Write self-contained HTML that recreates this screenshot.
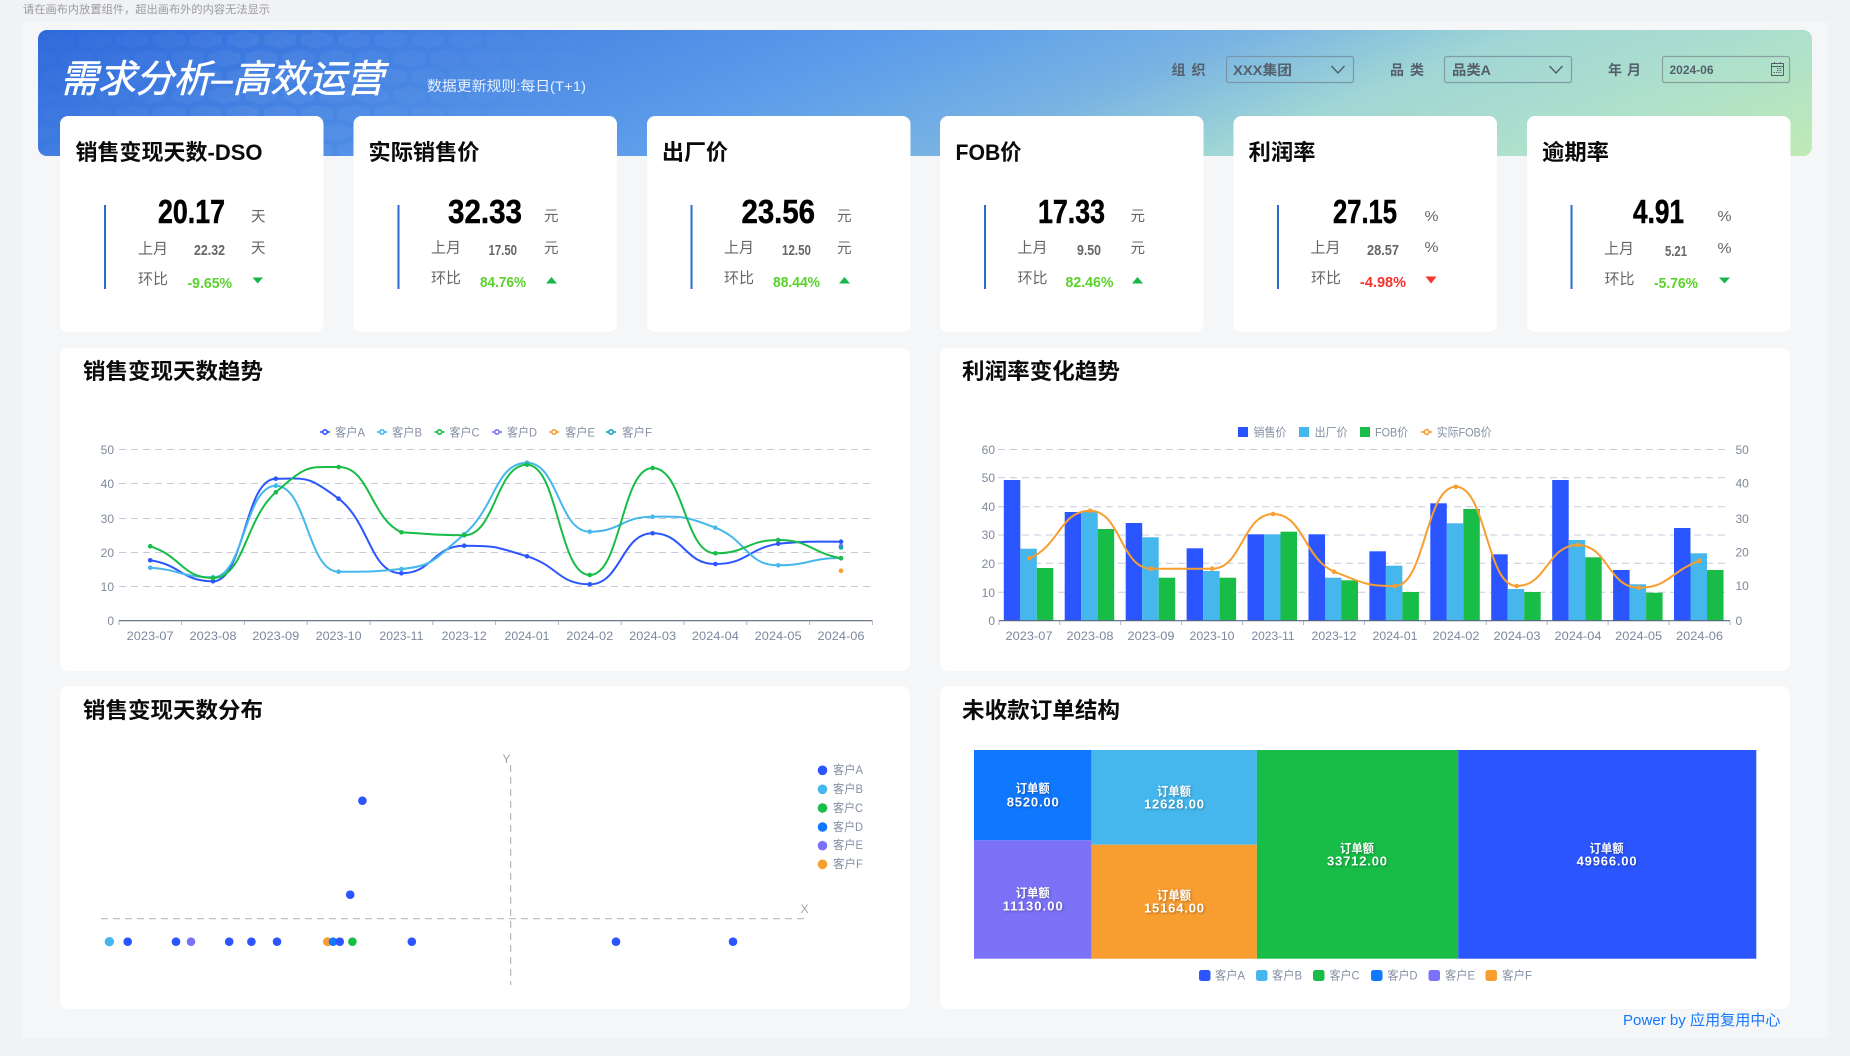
<!DOCTYPE html>
<html lang="zh-CN">
<head>
<meta charset="utf-8">
<title>需求分析-高效运营</title>
<style>
html,body{margin:0;padding:0;background:#f0f2f5;width:1850px;height:1056px;overflow:hidden}
svg{display:block;position:absolute;left:0;top:0}
text{font-family:"Liberation Sans","Noto Sans CJK SC",sans-serif}
.ct{font-size:22px;font-weight:700;fill:#0a0a0a}
.big{font-size:33px;font-weight:700;fill:#000;stroke:#000;stroke-width:.5px}
.u{font-size:14.5px;fill:#666}
.lb{font-size:15px;fill:#666}
.pv{font-size:15px;font-weight:700;fill:#666}
.g{font-size:15px;font-weight:700;fill:#5ad22a}
.r{font-size:15px;font-weight:700;fill:#f5332d}
.ax{font-size:12px;fill:#7d889c}
.lg{font-size:12px;fill:#848fa3}
.hd{font-size:14px;font-weight:700;fill:#55606c}
.tm{font-size:12px;font-weight:700;fill:#fff;text-anchor:middle}
.tn{font-size:13px;font-weight:700;fill:#fff;text-anchor:middle}
</style>
</head>
<body>
<svg width="1850" height="1056" viewBox="0 0 1850 1056" xmlns="http://www.w3.org/2000/svg">
<defs>
<linearGradient id="bn" gradientUnits="userSpaceOnUse" x1="38" y1="30" x2="319" y2="744">
<stop offset="0" stop-color="#2d69db"/>
<stop offset=".42" stop-color="#5c9cea"/>
<stop offset=".58" stop-color="#78b3e3"/>
<stop offset=".71" stop-color="#a0d6d5"/>
<stop offset=".85" stop-color="#aee0cc"/>
<stop offset="1" stop-color="#bfeab5"/>
</linearGradient>
<pattern id="hex" patternUnits="userSpaceOnUse" x="40" y="31" width="37" height="37">
<polygon points="18,0 34,4.5 34,13 18,17.5 2,13 2,4.5" fill="#fff"/>
<polygon points="-.5,18.5 15.5,23 15.5,31.5 -.5,36 -16.5,31.5 -16.5,23" fill="#fff"/>
<polygon points="36.5,18.5 52.5,23 52.5,31.5 36.5,36 20.5,31.5 20.5,23" fill="#fff"/>
</pattern>
<linearGradient id="hf" gradientUnits="userSpaceOnUse" x1="60" y1="30" x2="620" y2="120">
<stop offset="0" stop-color="#fff" stop-opacity=".015"/>
<stop offset=".35" stop-color="#fff" stop-opacity=".06"/>
<stop offset=".7" stop-color="#fff" stop-opacity=".03"/>
<stop offset="1" stop-color="#fff" stop-opacity="0"/>
</linearGradient>
<mask id="hm"><rect x="38" y="30" width="700" height="126" fill="url(#hf)"/></mask>
<marker id="mA" markerUnits="userSpaceOnUse" markerWidth="6" markerHeight="6" refX="3" refY="3"><circle cx="3" cy="3" r="2.3" fill="#2b55ff"/></marker>
<marker id="mB" markerUnits="userSpaceOnUse" markerWidth="6" markerHeight="6" refX="3" refY="3"><circle cx="3" cy="3" r="2.3" fill="#45b7ec"/></marker>
<marker id="mC" markerUnits="userSpaceOnUse" markerWidth="6" markerHeight="6" refX="3" refY="3"><circle cx="3" cy="3" r="2.3" fill="#17bd47"/></marker>
<marker id="mO" markerUnits="userSpaceOnUse" markerWidth="6" markerHeight="6" refX="3" refY="3"><circle cx="3" cy="3" r="2.3" fill="#f89d30"/></marker>
</defs>

<!-- canvas -->
<rect width="1850" height="1056" fill="#f0f2f5"/>
<rect x="22" y="22" width="1806" height="1016" fill="#f5f6f8"/>
<text x="23" y="13" font-size="11" fill="#9b9b9b" textLength="247" lengthAdjust="spacingAndGlyphs">请在画布内放置组件，超出画布外的内容无法显示</text>

<!-- banner -->
<rect x="38" y="30" width="1774" height="126" rx="9" fill="url(#bn)"/>
<rect x="38" y="30" width="700" height="126" fill="url(#hex)" mask="url(#hm)"/>
<text x="60" y="92" font-size="38" font-style="italic" font-weight="400" fill="#fff" stroke="#fff" stroke-width=".6" textLength="324" lengthAdjust="spacingAndGlyphs">需求分析–高效运营</text>
<text x="427" y="91" font-size="14" fill="#e8f1fc" textLength="159" lengthAdjust="spacingAndGlyphs">数据更新规则:每日(T+1)</text>

<text class="hd" x="1171.5" y="75" textLength="34">组 织</text>
<rect x="1226.5" y="56.5" width="127" height="26" rx="2" fill="none" stroke="#7a97a8" stroke-width="1.2"/>
<text class="hd" x="1233" y="75" textLength="59" lengthAdjust="spacingAndGlyphs">XXX集团</text>
<path d="M1331.5 66 L1338 73 L1344.5 66" fill="none" stroke="#4d5c68" stroke-width="1.3"/>

<text class="hd" x="1390" y="75" textLength="34">品 类</text>
<rect x="1444.5" y="56.5" width="127" height="26" rx="2" fill="none" stroke="#7f9ca8" stroke-width="1.2"/>
<text class="hd" x="1452" y="75" textLength="39" lengthAdjust="spacingAndGlyphs">品类A</text>
<path d="M1549.5 66 L1556 73 L1562.5 66" fill="none" stroke="#4d5c68" stroke-width="1.3"/>

<text class="hd" x="1608" y="75" textLength="33">年 月</text>
<rect x="1662.5" y="56.5" width="127" height="26" rx="2" fill="none" stroke="#8aa09f" stroke-width="1.2"/>
<text x="1669.5" y="74" font-size="12" fill="#55606c" font-weight="700" textLength="44" lengthAdjust="spacingAndGlyphs">2024-06</text>
<g fill="none" stroke="#55606c" stroke-width="1">
<rect x="1771.5" y="63.5" width="12" height="12"/>
<path d="M1771.5 66.5 H1783.5 M1774.5 62 V64 M1780.5 62 V64"/>
<path d="M1777 68.5h5M1777 70.5h5M1773.5 72.5h8" stroke-dasharray="1.4 1"/>
</g>

<!-- KPI cards -->
<g fill="#fff">
<rect x="60" y="116" width="263.5" height="216" rx="8"/>
<rect x="353.5" y="116" width="263.5" height="216" rx="8"/>
<rect x="647" y="116" width="263.5" height="216" rx="8"/>
<rect x="940" y="116" width="263.5" height="216" rx="8"/>
<rect x="1233.5" y="116" width="263.5" height="216" rx="8"/>
<rect x="1527" y="116" width="263.5" height="216" rx="8"/>
</g>
<g fill="#2b6cd2">
<rect x="104" y="205" width="2" height="84"/>
<rect x="397.5" y="205" width="2" height="84"/>
<rect x="690.5" y="205" width="2" height="84"/>
<rect x="984" y="205" width="2" height="84"/>
<rect x="1277" y="205" width="2" height="84"/>
<rect x="1570.5" y="205" width="2" height="84"/>
</g>

<!-- card 1 -->
<text class="ct" x="75.5" y="160" textLength="187" lengthAdjust="spacingAndGlyphs">销售变现天数-DSO</text>
<text class="big" x="158" y="223" textLength="67" lengthAdjust="spacingAndGlyphs">20.17</text>
<text class="u" x="251" y="221.5">天</text>
<text class="lb" x="138" y="253.5">上月</text>
<text class="pv" x="194" y="255" textLength="31" lengthAdjust="spacingAndGlyphs">22.32</text>
<text class="u" x="251" y="253">天</text>
<text class="lb" x="138" y="284">环比</text>
<text class="g" x="187.5" y="288" textLength="44.5" lengthAdjust="spacingAndGlyphs">-9.65%</text>
<path d="M252.5 277.5H263L257.7 283.5Z" fill="#17b54a"/>

<!-- card 2 -->
<text class="ct" x="368.5" y="160" textLength="111" lengthAdjust="spacingAndGlyphs">实际销售价</text>
<text class="big" x="448" y="223" textLength="74" lengthAdjust="spacingAndGlyphs">32.33</text>
<text class="u" x="544" y="221">元</text>
<text class="lb" x="431" y="252.5">上月</text>
<text class="pv" x="488.5" y="255" textLength="28.5" lengthAdjust="spacingAndGlyphs">17.50</text>
<text class="u" x="544" y="253">元</text>
<text class="lb" x="431" y="283">环比</text>
<text class="g" x="480" y="287" textLength="46" lengthAdjust="spacingAndGlyphs">84.76%</text>
<path d="M546 283.5H557L551.5 277Z" fill="#17b54a"/>

<!-- card 3 -->
<text class="ct" x="662" y="160" textLength="66" lengthAdjust="spacingAndGlyphs">出厂价</text>
<text class="big" x="741.5" y="223" textLength="73.5" lengthAdjust="spacingAndGlyphs">23.56</text>
<text class="u" x="837" y="221">元</text>
<text class="lb" x="724" y="252.5">上月</text>
<text class="pv" x="782" y="255" textLength="29" lengthAdjust="spacingAndGlyphs">12.50</text>
<text class="u" x="837" y="253">元</text>
<text class="lb" x="724" y="283">环比</text>
<text class="g" x="773" y="287" textLength="47" lengthAdjust="spacingAndGlyphs">88.44%</text>
<path d="M839 283.5H850L844.5 277Z" fill="#17b54a"/>

<!-- card 4 -->
<text class="ct" x="955.5" y="160" textLength="66" lengthAdjust="spacingAndGlyphs">FOB价</text>
<text class="big" x="1038" y="223" textLength="67" lengthAdjust="spacingAndGlyphs">17.33</text>
<text class="u" x="1130.5" y="221">元</text>
<text class="lb" x="1017.5" y="252.5">上月</text>
<text class="pv" x="1077" y="255" textLength="24" lengthAdjust="spacingAndGlyphs">9.50</text>
<text class="u" x="1130.5" y="253">元</text>
<text class="lb" x="1017.5" y="283">环比</text>
<text class="g" x="1065.5" y="287" textLength="48" lengthAdjust="spacingAndGlyphs">82.46%</text>
<path d="M1132 283.5H1143L1137.5 277Z" fill="#17b54a"/>

<!-- card 5 -->
<text class="ct" x="1248.5" y="160" textLength="67" lengthAdjust="spacingAndGlyphs">利润率</text>
<text class="big" x="1333" y="223" textLength="64" lengthAdjust="spacingAndGlyphs">27.15</text>
<text class="u" x="1424.5" y="221" textLength="14" lengthAdjust="spacingAndGlyphs">%</text>
<text class="lb" x="1310.5" y="252.5">上月</text>
<text class="pv" x="1367" y="255" textLength="32" lengthAdjust="spacingAndGlyphs">28.57</text>
<text class="u" x="1424.5" y="252" textLength="14" lengthAdjust="spacingAndGlyphs">%</text>
<text class="lb" x="1311" y="283">环比</text>
<text class="r" x="1360" y="287" textLength="46" lengthAdjust="spacingAndGlyphs">-4.98%</text>
<path d="M1425.5 276.5H1436.5L1431 283.5Z" fill="#f5332d"/>

<!-- card 6 -->
<text class="ct" x="1542" y="160" textLength="67" lengthAdjust="spacingAndGlyphs">逾期率</text>
<text class="big" x="1633" y="223" textLength="51" lengthAdjust="spacingAndGlyphs">4.91</text>
<text class="u" x="1717.5" y="221" textLength="14" lengthAdjust="spacingAndGlyphs">%</text>
<text class="lb" x="1604" y="253.5">上月</text>
<text class="pv" x="1665" y="256" textLength="22" lengthAdjust="spacingAndGlyphs">5.21</text>
<text class="u" x="1717.5" y="253" textLength="14" lengthAdjust="spacingAndGlyphs">%</text>
<text class="lb" x="1604.5" y="284">环比</text>
<text class="g" x="1654" y="288" textLength="44" lengthAdjust="spacingAndGlyphs">-5.76%</text>
<path d="M1719 277.5H1730L1724.5 283.5Z" fill="#17b54a"/>

<!-- panels -->
<g fill="#fff">
<rect x="60" y="348" width="850" height="323" rx="8"/>
<rect x="940" y="348" width="850" height="323" rx="8"/>
<rect x="60" y="686" width="850" height="323" rx="8"/>
<rect x="940" y="686" width="850" height="323" rx="8"/>
</g>
<text class="ct" x="83" y="379" textLength="180" lengthAdjust="spacingAndGlyphs">销售变现天数趋势</text>
<text class="ct" x="962" y="379" textLength="158" lengthAdjust="spacingAndGlyphs">利润率变化趋势</text>
<text class="ct" x="83" y="718" textLength="180" lengthAdjust="spacingAndGlyphs">销售变现天数分布</text>
<text class="ct" x="962" y="718" textLength="158" lengthAdjust="spacingAndGlyphs">未收款订单结构</text>

<!-- chart 1 -->
<g fill="none" stroke-width="1.6">
<path d="M320 432h10" stroke="#2b55ff"/><circle cx="325" cy="432" r="2.2" fill="#fff" stroke="#2b55ff"/>
<path d="M377 432h10" stroke="#45b7ec"/><circle cx="382" cy="432" r="2.2" fill="#fff" stroke="#45b7ec"/>
<path d="M434.5 432h10" stroke="#17bd47"/><circle cx="439.5" cy="432" r="2.2" fill="#fff" stroke="#17bd47"/>
<path d="M492 432h10" stroke="#7b72f8"/><circle cx="497" cy="432" r="2.2" fill="#fff" stroke="#7b72f8"/>
<path d="M549 432h10" stroke="#f89d30"/><circle cx="554" cy="432" r="2.2" fill="#fff" stroke="#f89d30"/>
<path d="M606 432h10" stroke="#1aa7b8"/><circle cx="611" cy="432" r="2.2" fill="#fff" stroke="#1aa7b8"/>
</g>
<text class="lg" x="335" y="436.5" textLength="30" lengthAdjust="spacingAndGlyphs">客户A</text>
<text class="lg" x="392" y="436.5" textLength="30" lengthAdjust="spacingAndGlyphs">客户B</text>
<text class="lg" x="449.5" y="436.5" textLength="30" lengthAdjust="spacingAndGlyphs">客户C</text>
<text class="lg" x="507" y="436.5" textLength="30" lengthAdjust="spacingAndGlyphs">客户D</text>
<text class="lg" x="565" y="436.5" textLength="30" lengthAdjust="spacingAndGlyphs">客户E</text>
<text class="lg" x="622" y="436.5" textLength="30" lengthAdjust="spacingAndGlyphs">客户F</text>

<g stroke="#c3cbd8" stroke-width="1" stroke-dasharray="7 5">
<path d="M119 449.5H870M119 483.5H870M119 518.5H870M119 552.5H870M119 586.5H870"/>
</g>
<g text-anchor="end">
<text class="ax" x="114" y="454">50</text>
<text class="ax" x="114" y="488">40</text>
<text class="ax" x="114" y="523">30</text>
<text class="ax" x="114" y="557">20</text>
<text class="ax" x="114" y="591">10</text>
<text class="ax" x="114" y="625">0</text>
</g>
<path d="M118.8 620.7H872.4" stroke="#59647c" stroke-width="1.2"/>
<path d="M119 621v4M181.6 621v4M244.4 621v4M307.2 621v4M370 621v4M432.8 621v4M495.6 621v4M558.4 621v4M621.2 621v4M684 621v4M746.8 621v4M809.6 621v4M872.4 621v4" stroke="#a9b3c4" stroke-width="1"/>
<g text-anchor="middle">
<text class="ax" x="150.2" y="640" textLength="47" lengthAdjust="spacingAndGlyphs">2023-07</text>
<text class="ax" x="213" y="640" textLength="47" lengthAdjust="spacingAndGlyphs">2023-08</text>
<text class="ax" x="275.8" y="640" textLength="47" lengthAdjust="spacingAndGlyphs">2023-09</text>
<text class="ax" x="338.6" y="640" textLength="46" lengthAdjust="spacingAndGlyphs">2023-10</text>
<text class="ax" x="401.4" y="640" textLength="44" lengthAdjust="spacingAndGlyphs">2023-11</text>
<text class="ax" x="464.2" y="640" textLength="45" lengthAdjust="spacingAndGlyphs">2023-12</text>
<text class="ax" x="527" y="640" textLength="45" lengthAdjust="spacingAndGlyphs">2024-01</text>
<text class="ax" x="589.8" y="640" textLength="47" lengthAdjust="spacingAndGlyphs">2024-02</text>
<text class="ax" x="652.6" y="640" textLength="47" lengthAdjust="spacingAndGlyphs">2024-03</text>
<text class="ax" x="715.4" y="640" textLength="47" lengthAdjust="spacingAndGlyphs">2024-04</text>
<text class="ax" x="778.2" y="640" textLength="47" lengthAdjust="spacingAndGlyphs">2024-05</text>
<text class="ax" x="841" y="640" textLength="47" lengthAdjust="spacingAndGlyphs">2024-06</text>
</g>
<g fill="none" stroke-width="2" stroke-linejoin="round">
<path stroke="#2b55ff" marker-start="url(#mA)" marker-mid="url(#mA)" marker-end="url(#mA)" d="M150.2 560.3C181.6 565,181.6 581.3,213 581.3C244.4 581.3,244.4 478.7,275.8 478.7C307.2 478.7,307.2 475.1,338.6 498.7C370 522.3,370 573.3,401.4 573.3C432.8 573.3,432.8 545.7,464.2 545.7C495.6 545.7,495.6 546.65,527 556.3C558.4 565.95,558.4 584.3,589.8 584.3C621.2 584.3,621.2 533.3,652.6 533.3C684 533.3,684 564,715.4 564C746.8 564,746.8 549.3,778.2 543.7C809.6 541,809.6 541.7,841 541.7"/>
<path stroke="#45b7ec" marker-start="url(#mB)" marker-mid="url(#mB)" marker-end="url(#mB)" d="M150.2 567.7C181.6 570,181.6 577.3,213 577.3C244.4 577.3,244.4 485.7,275.8 485.7C307.2 485.7,307.2 571.7,338.6 571.7C370 571.7,370 572,401.4 569C432.8 566,432.8 560.9,464.2 534.3C495.6 507.7,495.6 462.7,527 462.7C558.4 462.7,558.4 531.7,589.8 531.7C621.2 531.7,621.2 516.7,652.6 516.7C684 516.7,684 515.55,715.4 527.7C746.8 539.85,746.8 565.3,778.2 565.3C809.6 565.3,809.6 558,841 558"/>
<path stroke="#17bd47" marker-start="url(#mC)" marker-mid="url(#mC)" marker-end="url(#mC)" d="M150.2 546.3C181.6 556,181.6 578,213 578C244.4 578,244.4 520,275.8 492.3C307.2 464.5,307.2 467,338.6 467C370 467,370 518,401.4 532.3C432.8 534,432.8 535.3,464.2 535.3C495.6 535.3,495.6 464.7,527 464.7C558.4 464.7,558.4 575,589.8 575C621.2 575,621.2 468,652.6 468C684 468,684 553.3,715.4 553.3C746.8 553.3,746.8 540,778.2 540C809.6 540,809.6 552,841 558.3"/>
</g>
<circle cx="841" cy="546" r="2.3" fill="#7b72f8"/>
<circle cx="841" cy="547.5" r="2.3" fill="#1aa7b8"/>
<circle cx="841" cy="570.7" r="2.3" fill="#f89d30"/>

<!-- chart 2 -->
<rect x="1238" y="427" width="10" height="10" fill="#2b55ff"/>
<rect x="1299" y="427" width="10" height="10" fill="#45b7ec"/>
<rect x="1360" y="427" width="10" height="10" fill="#17bd47"/>
<path d="M1421 432h11" stroke="#f89d30" stroke-width="1.6"/><circle cx="1426.7" cy="432" r="2.4" fill="#fff" stroke="#f89d30" stroke-width="1.6"/>
<text class="lg" x="1253.5" y="436.5" textLength="33" lengthAdjust="spacingAndGlyphs">销售价</text>
<text class="lg" x="1314.6" y="436.5" textLength="33" lengthAdjust="spacingAndGlyphs">出厂价</text>
<text class="lg" x="1375" y="436.5" textLength="33" lengthAdjust="spacingAndGlyphs">FOB价</text>
<text class="lg" x="1436.7" y="436.5" textLength="55" lengthAdjust="spacingAndGlyphs">实际FOB价</text>

<path d="M998 449.5H1726M998 477.7H1726M998 506.7H1726M998 535H1726M998 563.3H1726M998 592.3H1726" stroke="#c3cbd8" stroke-width="1" stroke-dasharray="7 5"/>
<g text-anchor="end">
<text class="ax" x="995" y="454">60</text>
<text class="ax" x="995" y="482">50</text>
<text class="ax" x="995" y="511">40</text>
<text class="ax" x="995" y="539">30</text>
<text class="ax" x="995" y="568">20</text>
<text class="ax" x="995" y="597">10</text>
<text class="ax" x="995" y="625">0</text>
</g>
<text class="ax" x="1735.5" y="454">50</text>
<text class="ax" x="1735.5" y="487.5">40</text>
<text class="ax" x="1735.5" y="523">30</text>
<text class="ax" x="1735.5" y="556.5">20</text>
<text class="ax" x="1735.5" y="590">10</text>
<text class="ax" x="1735.5" y="625">0</text>

<g fill="#2b55ff">
<rect x="1003.8" y="480" width="16.5" height="140.7"/>
<rect x="1064.7" y="512" width="16.5" height="108.7"/>
<rect x="1125.7" y="523" width="16.5" height="97.7"/>
<rect x="1186.6" y="548.3" width="16.5" height="72.4"/>
<rect x="1247.5" y="534.3" width="16.5" height="86.4"/>
<rect x="1308.5" y="534.3" width="16.5" height="86.4"/>
<rect x="1369.4" y="551.3" width="16.5" height="69.4"/>
<rect x="1430.3" y="503.3" width="16.5" height="117.4"/>
<rect x="1491.2" y="554.3" width="16.5" height="66.4"/>
<rect x="1552.2" y="480" width="16.5" height="140.7"/>
<rect x="1613.1" y="570" width="16.5" height="50.7"/>
<rect x="1674" y="528" width="16.5" height="92.7"/>
</g>
<g fill="#45b7ec">
<rect x="1020.3" y="548.7" width="16.5" height="72"/>
<rect x="1081.2" y="511" width="16.5" height="109.7"/>
<rect x="1142.2" y="537.3" width="16.5" height="83.4"/>
<rect x="1203.1" y="571" width="16.5" height="49.7"/>
<rect x="1264" y="534.3" width="16.5" height="86.4"/>
<rect x="1325" y="577.7" width="16.5" height="43"/>
<rect x="1385.9" y="565.7" width="16.5" height="55"/>
<rect x="1446.8" y="523.3" width="16.5" height="97.4"/>
<rect x="1507.7" y="589" width="16.5" height="31.7"/>
<rect x="1568.7" y="540" width="16.5" height="80.7"/>
<rect x="1629.6" y="584.3" width="16.5" height="36.4"/>
<rect x="1690.5" y="553.3" width="16.5" height="67.4"/>
</g>
<g fill="#17bd47">
<rect x="1036.8" y="568" width="16.5" height="52.7"/>
<rect x="1097.7" y="529" width="16.5" height="91.7"/>
<rect x="1158.7" y="577.7" width="16.5" height="43"/>
<rect x="1219.6" y="577.7" width="16.5" height="43"/>
<rect x="1280.5" y="531.7" width="16.5" height="89"/>
<rect x="1341.5" y="580.3" width="16.5" height="40.4"/>
<rect x="1402.4" y="592" width="16.5" height="28.7"/>
<rect x="1463.3" y="509" width="16.5" height="111.7"/>
<rect x="1524.2" y="592" width="16.5" height="28.7"/>
<rect x="1585.2" y="557.3" width="16.5" height="63.4"/>
<rect x="1646.1" y="592.7" width="16.5" height="28"/>
<rect x="1707" y="570" width="16.5" height="50.7"/>
</g>
<path d="M998.8 620.7H1730" stroke="#59647c" stroke-width="1.2"/>
<path d="M999 621v4M1059.7 621v4M1120.7 621v4M1181.6 621v4M1242.5 621v4M1303.5 621v4M1364.4 621v4M1425.3 621v4M1486.2 621v4M1547.2 621v4M1608.1 621v4M1669 621v4M1730 621v4" stroke="#a9b3c4" stroke-width="1"/>
<g text-anchor="middle">
<text class="ax" x="1029" y="640" textLength="47" lengthAdjust="spacingAndGlyphs">2023-07</text>
<text class="ax" x="1090" y="640" textLength="47" lengthAdjust="spacingAndGlyphs">2023-08</text>
<text class="ax" x="1151" y="640" textLength="47" lengthAdjust="spacingAndGlyphs">2023-09</text>
<text class="ax" x="1212" y="640" textLength="45" lengthAdjust="spacingAndGlyphs">2023-10</text>
<text class="ax" x="1273" y="640" textLength="43" lengthAdjust="spacingAndGlyphs">2023-11</text>
<text class="ax" x="1334" y="640" textLength="45" lengthAdjust="spacingAndGlyphs">2023-12</text>
<text class="ax" x="1395" y="640" textLength="45" lengthAdjust="spacingAndGlyphs">2024-01</text>
<text class="ax" x="1456" y="640" textLength="47" lengthAdjust="spacingAndGlyphs">2024-02</text>
<text class="ax" x="1517" y="640" textLength="47" lengthAdjust="spacingAndGlyphs">2024-03</text>
<text class="ax" x="1578" y="640" textLength="47" lengthAdjust="spacingAndGlyphs">2024-04</text>
<text class="ax" x="1638.6" y="640" textLength="47" lengthAdjust="spacingAndGlyphs">2024-05</text>
<text class="ax" x="1699.5" y="640" textLength="47" lengthAdjust="spacingAndGlyphs">2024-06</text>
</g>
<path fill="none" stroke="#f89d30" stroke-width="2" marker-start="url(#mO)" marker-mid="url(#mO)" marker-end="url(#mO)" d="M1029.3 558.3C1059.8 546,1059.8 510.7,1090.2 510.7C1120.7 510.7,1120.7 568.7,1151.2 568.7C1181.6 568.7,1181.6 568.7,1212.1 568.7C1242.5 568.7,1242.5 514,1273 514C1303.5 514,1303.5 558,1334 571.7C1364.4 583,1364.4 586,1394.9 586C1425.3 586,1425.3 486.7,1455.8 486.7C1486.3 486.7,1486.3 586,1516.7 586C1547.2 586,1547.2 545,1577.7 545C1608.1 545,1608.1 587.7,1638.6 587.7C1669 587.7,1669 572,1699.5 560.7"/>

<!-- scatter -->
<path d="M510.6 765V985M101 918.7H807.5" stroke="#b9b9b9" stroke-width="1.2" stroke-dasharray="7 5" fill="none"/>
<text x="502.5" y="763" font-size="12" fill="#a3a3a3">Y</text>
<text x="800.5" y="913" font-size="12" fill="#a3a3a3">X</text>
<g fill="#2b55ff">
<circle cx="362.4" cy="800.7" r="4.3"/>
<circle cx="350.2" cy="894.7" r="4.3"/>
<circle cx="127.7" cy="941.7" r="4.3"/>
<circle cx="176" cy="941.7" r="4.3"/>
<circle cx="229.2" cy="941.7" r="4.3"/>
<circle cx="251.4" cy="941.7" r="4.3"/>
<circle cx="277" cy="941.7" r="4.3"/>
<circle cx="411.8" cy="941.7" r="4.3"/>
<circle cx="616" cy="941.7" r="4.3"/>
<circle cx="733" cy="941.7" r="4.3"/>
</g>
<circle cx="109.4" cy="941.7" r="4.7" fill="#45b7ec"/>
<circle cx="191" cy="941.7" r="4.3" fill="#7b72f8"/>
<circle cx="327.5" cy="941.7" r="4.5" fill="#f89d30"/>
<circle cx="333" cy="941.7" r="4.3" fill="#0f78ff"/>
<circle cx="339.7" cy="941.7" r="4.3" fill="#2b55ff"/>
<circle cx="352.4" cy="941.7" r="4.3" fill="#17bd47"/>
<circle cx="822.5" cy="770.3" r="4.8" fill="#2b55ff"/>
<circle cx="822.5" cy="789.3" r="4.8" fill="#45b7ec"/>
<circle cx="822.5" cy="808" r="4.8" fill="#17bd47"/>
<circle cx="822.5" cy="827" r="4.8" fill="#0f78ff"/>
<circle cx="822.5" cy="845.7" r="4.8" fill="#7b72f8"/>
<circle cx="822.5" cy="864.3" r="4.8" fill="#f89d30"/>
<text class="lg" x="833" y="774" textLength="30" lengthAdjust="spacingAndGlyphs">客户A</text>
<text class="lg" x="833" y="793" textLength="30" lengthAdjust="spacingAndGlyphs">客户B</text>
<text class="lg" x="833" y="812" textLength="30" lengthAdjust="spacingAndGlyphs">客户C</text>
<text class="lg" x="833" y="831" textLength="30" lengthAdjust="spacingAndGlyphs">客户D</text>
<text class="lg" x="833" y="849" textLength="30" lengthAdjust="spacingAndGlyphs">客户E</text>
<text class="lg" x="833" y="868" textLength="30" lengthAdjust="spacingAndGlyphs">客户F</text>

<!-- treemap -->
<rect x="974" y="750" width="117.4" height="90.3" fill="#0f78ff"/>
<rect x="974" y="840.3" width="117.4" height="118.4" fill="#7b72f8"/>
<rect x="1091.4" y="750" width="165.5" height="94.7" fill="#45b7ec"/>
<rect x="1091.4" y="844.7" width="165.5" height="114" fill="#f89d30"/>
<rect x="1256.9" y="750" width="201.3" height="208.7" fill="#17bd47"/>
<rect x="1458.2" y="750" width="298.1" height="208.7" fill="#2b55ff"/>
<g style="filter:drop-shadow(1px 1px 1px rgba(0,0,0,.3))">
<text class="tm" x="1032.7" y="792.5" textLength="34" lengthAdjust="spacingAndGlyphs">订单额</text>
<text class="tn" x="1032.7" y="806.5" textLength="52" lengthAdjust="spacing">8520.00</text>
<text class="tm" x="1032.7" y="897" textLength="34" lengthAdjust="spacingAndGlyphs">订单额</text>
<text class="tn" x="1032.7" y="910.5" textLength="60" lengthAdjust="spacing">11130.00</text>
<text class="tm" x="1174" y="795.5" textLength="34" lengthAdjust="spacingAndGlyphs">订单额</text>
<text class="tn" x="1174" y="808.5" textLength="60" lengthAdjust="spacing">12628.00</text>
<text class="tm" x="1174" y="899.5" textLength="34" lengthAdjust="spacingAndGlyphs">订单额</text>
<text class="tn" x="1174" y="912.5" textLength="60" lengthAdjust="spacing">15164.00</text>
<text class="tm" x="1357" y="852.5" textLength="34" lengthAdjust="spacingAndGlyphs">订单额</text>
<text class="tn" x="1357" y="865.5" textLength="60" lengthAdjust="spacing">33712.00</text>
<text class="tm" x="1606.6" y="852.5" textLength="34" lengthAdjust="spacingAndGlyphs">订单额</text>
<text class="tn" x="1606.6" y="865.5" textLength="60" lengthAdjust="spacing">49966.00</text>
</g>
<rect x="1199" y="970" width="11.5" height="11" rx="2.5" fill="#2b55ff"/>
<rect x="1256" y="970" width="11.5" height="11" rx="2.5" fill="#45b7ec"/>
<rect x="1313" y="970" width="11.5" height="11" rx="2.5" fill="#17bd47"/>
<rect x="1371" y="970" width="11.5" height="11" rx="2.5" fill="#0f78ff"/>
<rect x="1428.5" y="970" width="11.5" height="11" rx="2.5" fill="#7b72f8"/>
<rect x="1485.5" y="970" width="11.5" height="11" rx="2.5" fill="#f89d30"/>
<text class="lg" x="1215" y="979.5" textLength="30" lengthAdjust="spacingAndGlyphs">客户A</text>
<text class="lg" x="1272" y="979.5" textLength="30" lengthAdjust="spacingAndGlyphs">客户B</text>
<text class="lg" x="1329.5" y="979.5" textLength="30" lengthAdjust="spacingAndGlyphs">客户C</text>
<text class="lg" x="1387.5" y="979.5" textLength="30" lengthAdjust="spacingAndGlyphs">客户D</text>
<text class="lg" x="1445" y="979.5" textLength="30" lengthAdjust="spacingAndGlyphs">客户E</text>
<text class="lg" x="1502" y="979.5" textLength="30" lengthAdjust="spacingAndGlyphs">客户F</text>

<text x="1623" y="1025" font-size="15" fill="#1677ff" textLength="157.5" lengthAdjust="spacingAndGlyphs">Power by 应用复用中心</text>
</svg>
</body>
</html>
